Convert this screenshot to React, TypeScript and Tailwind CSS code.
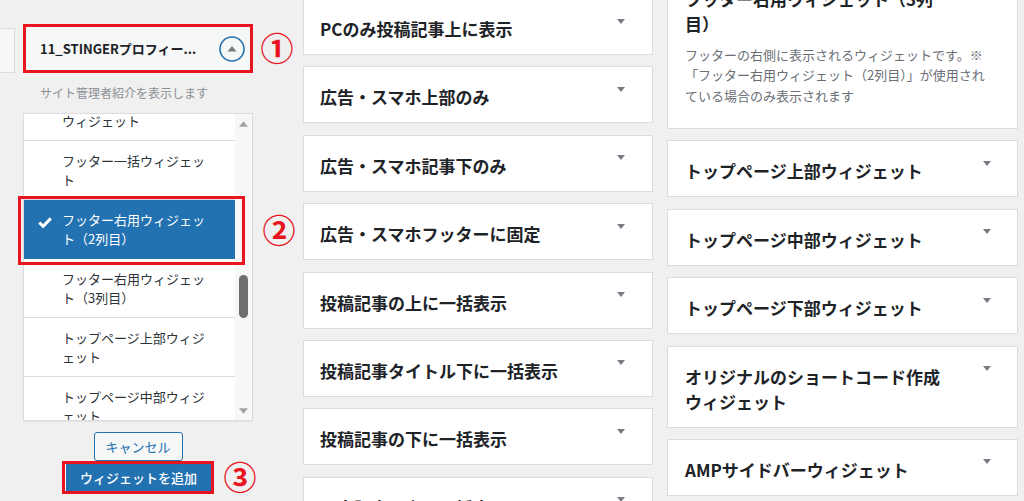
import React from 'react';

const font = "font-['Noto_Sans_CJK_JP','Noto_Sans',sans-serif]";

const middleWidgets = [
    'PCのみ投稿記事上に表示',
    '広告・スマホ上部のみ',
    '広告・スマホ記事下のみ',
    '広告・スマホフッターに固定',
    '投稿記事の上に一括表示',
    '投稿記事タイトル下に一括表示',
    '投稿記事の下に一括表示',
    '固定記事の上に一括表示',
];

const rightWidgets = [
    ['トップページ上部ウィジェット'],
    ['トップページ中部ウィジェット'],
    ['トップページ下部ウィジェット'],
    ['オリジナルのショートコード作成', 'ウィジェット'],
    ['AMPサイドバーウィジェット'],
];

const areaItems = [
    { lines: ['スマホ・タブレット用', 'ウィジェット'] },
    { lines: ['フッター一括ウィジェッ', 'ト'] },
    { lines: ['フッター右用ウィジェッ', 'ト（2列目）'], selected: true },
    { lines: ['フッター右用ウィジェッ', 'ト（3列目）'] },
    { lines: ['トップページ上部ウィジ', 'ェット'] },
    { lines: ['トップページ中部ウィジ', 'ェット'] },
];

const DownArrow: React.FC<{ className?: string }> = ({ className }) => (
    <svg viewBox="0 0 8 5" className={className}>
        <path d="M0 0h8L4 5z" fill="currentColor" />
    </svg>
);

const UpArrow: React.FC<{ className?: string }> = ({ className }) => (
    <svg viewBox="0 0 8 5" className={className}>
        <path d="M0 5h8L4 0z" fill="currentColor" />
    </svg>
);

const Circled: React.FC<{ children: React.ReactNode; className: string }> = ({ children, className }) => (
    <span
        className={`absolute flex h-[30px] w-[30px] items-center justify-center text-[33px] font-bold leading-[30px] text-[#e8141f] ${className}`}
    >
        {children}
    </span>
);

const WidgetCard: React.FC<{ lines: string[]; right?: boolean }> = ({ lines, right }) => (
    <div
        className={`flex items-start border border-[#dcdcde] bg-white pt-[17px] pb-[13px] ${
            right ? 'pl-[17px] pr-[26px]' : 'pl-[16px] pr-[27px]'
        }`}
    >
        <h3 className="flex-1 text-[17px] font-bold leading-[25px] text-[#1d2327]">
            {lines.map((l, i) => (
                <div key={i}>{l}</div>
            ))}
        </h3>
        <DownArrow className="mt-[2.5px] h-[5px] w-[8px] text-[#787c82]" />
    </div>
);

export default function App() {
    return (
        <div className={`flex h-[501px] w-[1024px] overflow-hidden bg-[#f0f0f1] ${font}`}>
            {/* Left: widget area chooser */}
            <div className="relative flex w-[303px] shrink-0">
                <div className="mt-[28px] h-[45px] w-[15px] border border-l-0 border-[#dcdcde] bg-[#f6f7f7]" />

                <div className="ml-[8px] flex w-[230px] flex-col">
                    {/* Widget header */}
                    <div className="mt-[24px] flex h-[49px] items-center justify-between border-[3px] border-[#e8141f] bg-[#f6f7f7] pl-[14px] pr-[5px]">
                        <span className="text-[13px] font-bold text-[#1d2327]">11_STINGERプロフィー...</span>
                        <svg viewBox="0 0 26 26" className="h-[26px] w-[26px]">
                            <circle cx="13" cy="13" r="12" fill="none" stroke="#2271b1" strokeWidth="1.6" />
                            <path d="M8.5 15.5h9L13 10z" fill="#787c82" />
                        </svg>
                    </div>

                    <p className="mt-[11px] pl-[17px] text-[12px] leading-[18px] text-[#8c8f94]">サイト管理者紹介を表示します</p>

                    {/* Area list */}
                    <div className="mt-[11px] flex h-[308px] overflow-hidden border border-[#dcdcde] bg-white shadow-[0_1px_1px_rgba(0,0,0,0.04)]">
                        <div className="w-[211px] overflow-hidden">
                            <div className="mt-[-32px]">
                                {areaItems.map((item, i) => (
                                    <div
                                        key={i}
                                        className={`relative py-[10px] pl-[38px] text-[13px] leading-[19px] ${
                                            item.selected
                                                ? 'border-b border-[#2271b1] bg-[#2271b1] text-white'
                                                : 'border-b border-[#dcdcde] text-[#2c3338]'
                                        }`}
                                    >
                                        {item.selected && (
                                            <svg viewBox="0 0 14 11" className="absolute left-[14px] top-[17px] h-[11px] w-[14px]">
                                                <path d="M1.3 5.6l3.9 3.7L12.8 1.4" fill="none" stroke="white" strokeWidth="3" />
                                            </svg>
                                        )}
                                        {item.lines.map((l, j) => (
                                            <div key={j}>{l}</div>
                                        ))}
                                    </div>
                                ))}
                            </div>
                        </div>
                        <div className="flex w-[17px] flex-col items-center bg-[#f7f7f7]">
                            <UpArrow className="mt-[7px] h-[6px] w-[9px] text-[#a3a3a3]" />
                            <div className="mt-[148px] h-[43px] w-[9px] rounded-full bg-[#6e6e6e]" />
                            <div className="flex-1" />
                            <DownArrow className="mb-[6px] h-[6px] w-[9px] text-[#a3a3a3]" />
                        </div>
                    </div>

                    {/* Buttons */}
                    <div className="flex flex-col items-center">
                        <button className="mt-[11px] h-[29px] w-[89px] rounded-[3px] border border-[#2271b1] bg-[#f6f7f7] text-[13px] text-[#2271b1]">
                            キャンセル
                        </button>
                        <div className="flex h-[33px] w-[152px] border-[3px] border-[#e8141f] bg-white pl-[1px]">
                            <button className="h-full w-full bg-[#2271b1] text-[13px] font-medium text-white">
                                ウィジェットを追加
                            </button>
                        </div>
                    </div>
                </div>

                {/* Annotations */}
                <div className="absolute left-[18px] top-[196px] h-[69px] w-[227px] border-[3px] border-[#e8141f]" />
                <Circled className="left-[262px] top-[32px]">①</Circled>
                <Circled className="left-[264px] top-[214px]">②</Circled>
                <Circled className="left-[225px] top-[461px]">③</Circled>
            </div>

            {/* Middle column */}
            <div className="mt-[-2px] flex w-[350px] shrink-0 flex-col gap-[11.4px]">
                {middleWidgets.map((w) => (
                    <WidgetCard key={w} lines={[w]} />
                ))}
            </div>

            {/* Right column */}
            <div className="ml-[14px] mt-[-32.5px] flex w-[351px] shrink-0 flex-col gap-[11.4px]">
                <div className="border border-[#dcdcde] bg-white pb-[22px] pl-[17px] pr-[17px] pt-[17px]">
                    <h3 className="text-[17px] font-bold leading-[25px] text-[#1d2327]">
                        <div>フッター右用ウィジェット（3列</div>
                        <div>目）</div>
                    </h3>
                    <p className="mt-[9px] text-[13px] leading-[20.5px] text-[#6b6f75]">
                        <span className="block">フッターの右側に表示されるウィジェットです。※</span>
                        <span className="block">「フッター右用ウィジェット（2列目）」が使用され</span>
                        <span className="block">ている場合のみ表示されます</span>
                    </p>
                </div>
                {rightWidgets.map((lines) => (
                    <WidgetCard key={lines[0]} lines={lines} right />
                ))}
            </div>
        </div>
    );
}
